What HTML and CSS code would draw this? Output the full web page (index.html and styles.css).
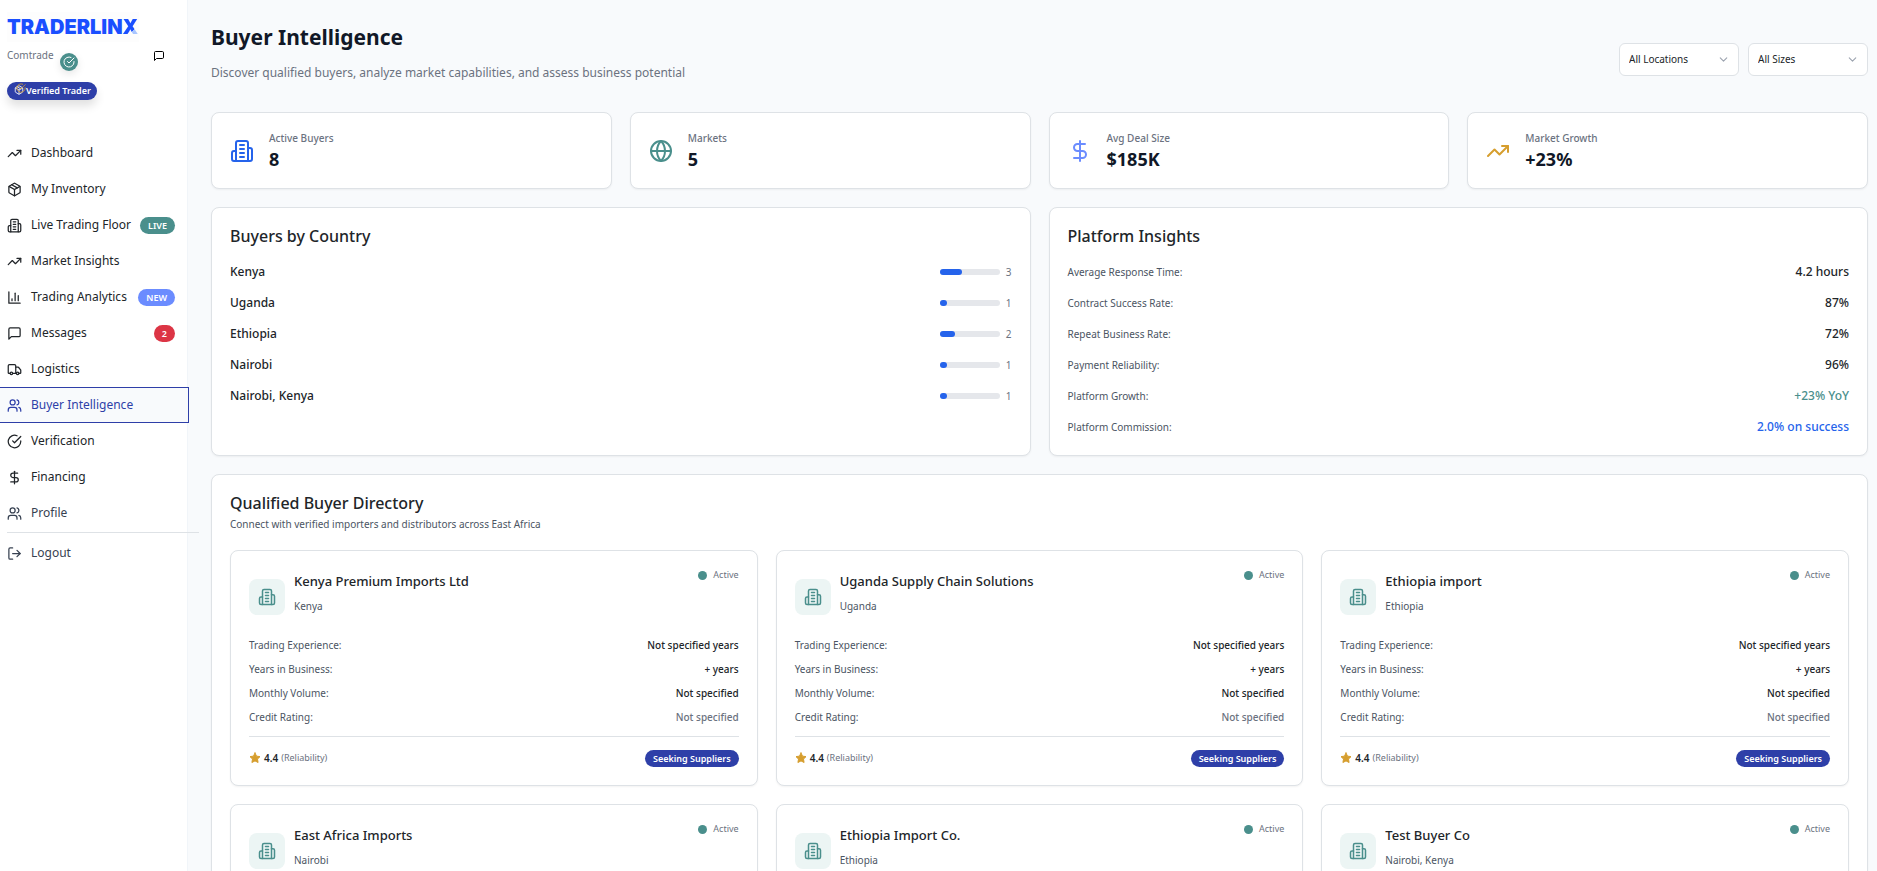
FILE: index.html
```html
<!DOCTYPE html>
<html lang="en">
<head>
    <meta charset="UTF-8">
    <meta name="viewport" content="width=device-width, initial-scale=1.0">
    <title>Buyer Intelligence - Traderlinx</title>
    <link rel="stylesheet" href="styles.css">
</head>
<body>
    <svg class="icon-defs" aria-hidden="true">
        <symbol id="i-trend" viewBox="0 0 24 24"><polyline points="22 7 13.5 15.5 8.5 10.5 2 17"/><polyline points="16 7 22 7 22 13"/></symbol>
        <symbol id="i-package" viewBox="0 0 24 24"><path d="m7.5 4.27 9 5.15"/><path d="M21 8a2 2 0 0 0-1-1.73l-7-4a2 2 0 0 0-2 0l-7 4A2 2 0 0 0 3 8v8a2 2 0 0 0 1 1.73l7 4a2 2 0 0 0 2 0l7-4A2 2 0 0 0 21 16Z"/><path d="m3.3 7 8.7 5 8.7-5"/><path d="M12 22V12"/></symbol>
        <symbol id="i-building" viewBox="0 0 24 24"><path d="M6 22V4a2 2 0 0 1 2-2h8a2 2 0 0 1 2 2v18Z"/><path d="M6 12H4a2 2 0 0 0-2 2v6a2 2 0 0 0 2 2h2"/><path d="M18 9h2a2 2 0 0 1 2 2v9a2 2 0 0 1-2 2h-2"/><path d="M10 6h4M10 10h4M10 14h4M10 18h4"/></symbol>
        <symbol id="i-chart" viewBox="0 0 24 24"><path d="M3 3v18h18"/><path d="M18 17V9"/><path d="M13 17V5"/><path d="M8 17v-3"/></symbol>
        <symbol id="i-message" viewBox="0 0 24 24"><path d="M21 15a2 2 0 0 1-2 2H7l-4 4V5a2 2 0 0 1 2-2h14a2 2 0 0 1 2 2z"/></symbol>
        <symbol id="i-truck" viewBox="0 0 24 24"><path d="M14 18V6a2 2 0 0 0-2-2H4a2 2 0 0 0-2 2v11a1 1 0 0 0 1 1h2"/><path d="M15 18H9"/><path d="M19 18h2a1 1 0 0 0 1-1v-3.65a1 1 0 0 0-.22-.624l-3.48-4.35A1 1 0 0 0 17.52 8H14"/><circle cx="17" cy="18" r="2"/><circle cx="7" cy="18" r="2"/></symbol>
        <symbol id="i-users" viewBox="0 0 24 24"><path d="M16 21v-2a4 4 0 0 0-4-4H6a4 4 0 0 0-4 4v2"/><circle cx="9" cy="7" r="4"/><path d="M22 21v-2a4 4 0 0 0-3-3.87"/><path d="M16 3.13a4 4 0 0 1 0 7.75"/></symbol>
        <symbol id="i-check" viewBox="0 0 24 24"><path d="M22 11.08V12a10 10 0 1 1-5.93-9.14"/><path d="m9 11 3 3L22 4"/></symbol>
        <symbol id="i-dollar" viewBox="0 0 24 24"><path d="M12 2v20"/><path d="M17 5H9.5a3.5 3.5 0 0 0 0 7h5a3.5 3.5 0 0 1 0 7H6"/></symbol>
        <symbol id="i-logout" viewBox="0 0 24 24"><path d="M9 21H5a2 2 0 0 1-2-2V5a2 2 0 0 1 2-2h4"/><polyline points="16 17 21 12 16 7"/><path d="M21 12H9"/></symbol>
        <symbol id="i-globe" viewBox="0 0 24 24"><circle cx="12" cy="12" r="10"/><path d="M12 2a14.5 14.5 0 0 0 0 20 14.5 14.5 0 0 0 0-20"/><path d="M2 12h20"/></symbol>
        <symbol id="i-chevron" viewBox="0 0 24 24"><path d="m6 9 6 6 6-6"/></symbol>
        <symbol id="i-star" viewBox="0 0 24 24"><polygon points="12 2 15.09 8.26 22 9.27 17 14.14 18.18 21.02 12 17.77 5.82 21.02 7 14.14 2 9.27 8.91 8.26 12 2"/></symbol>
    </svg>

    <div class="layout">
        <aside class="sidebar">
            <div class="brand">
                <div class="logo">TRADERLIN<span>X</span></div>
                <div class="account">
                    <span class="account-name">Comtrade</span>
                    <span class="account-check"><svg class="icon"><use href="#i-check"/></svg></span>
                    <button class="account-chat" aria-label="Messages"><svg class="icon"><use href="#i-message"/></svg></button>
                </div>
                <span class="verified">
                    <span class="verified-icons">
                        <svg class="icon"><use href="#i-package"/></svg>
                        <svg class="icon gold"><use href="#i-check"/></svg>
                    </span>
                    Verified Trader
                </span>
            </div>
            <nav class="nav">
                <a href="#"><svg class="icon"><use href="#i-trend"/></svg>Dashboard</a>
                <a href="#"><svg class="icon"><use href="#i-package"/></svg>My Inventory</a>
                <a href="#"><svg class="icon"><use href="#i-building"/></svg>Live Trading Floor<span class="badge live">LIVE</span></a>
                <a href="#"><svg class="icon"><use href="#i-trend"/></svg>Market Insights</a>
                <a href="#"><svg class="icon"><use href="#i-chart"/></svg>Trading Analytics<span class="badge new">NEW</span></a>
                <a href="#"><svg class="icon"><use href="#i-message"/></svg>Messages<span class="badge count">2</span></a>
                <a href="#"><svg class="icon"><use href="#i-truck"/></svg>Logistics</a>
                <a href="#" class="active"><svg class="icon"><use href="#i-users"/></svg>Buyer Intelligence</a>
                <a href="#"><svg class="icon"><use href="#i-check"/></svg>Verification</a>
                <a href="#"><svg class="icon"><use href="#i-dollar"/></svg>Financing</a>
                <a href="#" class="muted"><svg class="icon"><use href="#i-users"/></svg>Profile</a>
            </nav>
            <div class="nav nav-footer">
                <a href="#" class="muted"><svg class="icon"><use href="#i-logout"/></svg>Logout</a>
            </div>
        </aside>

        <main class="main">
            <header class="page-header">
                <div>
                    <h1>Buyer Intelligence</h1>
                    <p>Discover qualified buyers, analyze market capabilities, and assess business potential</p>
                </div>
                <div class="filters">
                    <div class="select">
                        <select id="location" aria-label="Location"><option>All Locations</option></select>
                        <svg class="icon"><use href="#i-chevron"/></svg>
                    </div>
                    <div class="select">
                        <select id="size" aria-label="Size"><option>All Sizes</option></select>
                        <svg class="icon"><use href="#i-chevron"/></svg>
                    </div>
                </div>
            </header>

            <section class="stats">
                <div class="card stat">
                    <svg class="icon blue"><use href="#i-building"/></svg>
                    <div><p class="stat-label">Active Buyers</p><p class="stat-value">8</p></div>
                </div>
                <div class="card stat">
                    <svg class="icon teal"><use href="#i-globe"/></svg>
                    <div><p class="stat-label">Markets</p><p class="stat-value">5</p></div>
                </div>
                <div class="card stat">
                    <svg class="icon periwinkle"><use href="#i-dollar"/></svg>
                    <div><p class="stat-label">Avg Deal Size</p><p class="stat-value">$185K</p></div>
                </div>
                <div class="card stat">
                    <svg class="icon gold"><use href="#i-trend"/></svg>
                    <div><p class="stat-label">Market Growth</p><p class="stat-value">+23%</p></div>
                </div>
            </section>

            <section class="panels">
                <div class="card panel">
                    <h2>Buyers by Country</h2>
                    <ul class="rows" id="countries"></ul>
                </div>
                <div class="card panel">
                    <h2>Platform Insights</h2>
                    <ul class="rows">
                        <li><span class="label">Average Response Time:</span><span class="value">4.2 hours</span></li>
                        <li><span class="label">Contract Success Rate:</span><span class="value">87%</span></li>
                        <li><span class="label">Repeat Business Rate:</span><span class="value">72%</span></li>
                        <li><span class="label">Payment Reliability:</span><span class="value">96%</span></li>
                        <li><span class="label">Platform Growth:</span><span class="value teal">+23% YoY</span></li>
                        <li><span class="label">Platform Commission:</span><span class="value blue">2.0% on success</span></li>
                    </ul>
                </div>
            </section>

            <section class="card directory">
                <h2>Qualified Buyer Directory</h2>
                <p class="directory-sub">Connect with verified importers and distributors across East Africa</p>
                <div class="buyers" id="buyers"></div>
            </section>
        </main>
    </div>

    <script>
        const countries = [
            { name: 'Kenya', count: 3 },
            { name: 'Uganda', count: 1 },
            { name: 'Ethiopia', count: 2 },
            { name: 'Nairobi', count: 1 },
            { name: 'Nairobi, Kenya', count: 1 }
        ];

        const buyers = [
            { name: 'Kenya Premium Imports Ltd', location: 'Kenya' },
            { name: 'Uganda Supply Chain Solutions', location: 'Uganda' },
            { name: 'Ethiopia import', location: 'Ethiopia' },
            { name: 'East Africa Imports', location: 'Nairobi' },
            { name: 'Ethiopia Import Co.', location: 'Ethiopia' },
            { name: 'Test Buyer Co', location: 'Nairobi, Kenya' }
        ];

        const total = countries.reduce((sum, c) => sum + c.count, 0);

        document.getElementById('countries').innerHTML = countries.map(c => `
            <li>
                <span class="value">${c.name}</span>
                <span class="share">
                    <span class="bar"><span class="bar-fill" style="width: ${c.count / total * 100}%"></span></span>
                    <span class="share-count">${c.count}</span>
                </span>
            </li>
        `).join('');

        document.getElementById('buyers').innerHTML = buyers.map(b => `
            <article class="card buyer">
                <div class="buyer-head">
                    <span class="buyer-icon"><svg class="icon teal"><use href="#i-building"/></svg></span>
                    <div class="buyer-title">
                        <h3>${b.name}</h3>
                        <p>${b.location}</p>
                    </div>
                    <span class="status">Active</span>
                </div>
                <dl class="details">
                    <div><dt>Trading Experience:</dt><dd>Not specified years</dd></div>
                    <div><dt>Years in Business:</dt><dd>+ years</dd></div>
                    <div><dt>Monthly Volume:</dt><dd>Not specified</dd></div>
                    <div><dt>Credit Rating:</dt><dd class="empty">Not specified</dd></div>
                </dl>
                <div class="buyer-foot">
                    <svg class="icon star"><use href="#i-star"/></svg>
                    <span class="rating">4.4</span>
                    <span class="rating-note">(Reliability)</span>
                    <span class="badge seeking">Seeking Suppliers</span>
                </div>
            </article>
        `).join('');
    </script>
</body>
</html>
```
FILE: styles.css
```css
* {
    box-sizing: border-box;
    margin: 0;
    padding: 0;
}

html {
    scrollbar-width: none;
}

body {
    font-family: 'Noto Sans', 'Open Sans', sans-serif;
    font-size: 12px;
    line-height: 18px;
    color: #212529;
    background: #f8fafc;
}

ul {
    list-style: none;
}

a {
    color: inherit;
    text-decoration: none;
}

.icon-defs {
    position: absolute;
    width: 0;
    height: 0;
}

.icon {
    flex: none;
    width: 15px;
    height: 15px;
    fill: none;
    stroke: currentColor;
    stroke-width: 2;
    stroke-linecap: round;
    stroke-linejoin: round;
}

.blue { color: #2563eb; }
.teal { color: #4a8f8c; }
.periwinkle { color: #6b8cff; }
.gold { color: #d69e2e; }

.layout {
    display: flex;
    min-height: 100vh;
}

/* Sidebar */
.sidebar {
    flex: none;
    width: 188px;
    background: #fff;
    border-right: 1px solid #f1f5f9;
    z-index: 1;
}

.brand {
    height: 135px;
    padding: 12px 12px 0 7px;
}

.logo {
    width: 132px;
    height: 30px;
    line-height: 31px;
    background: #fdfdfd;
    font-family: Inter, sans-serif;
    font-size: 20px;
    font-weight: 900;
    color: #1a4fff;
}

.logo span {
    background: linear-gradient(135deg, #1a4fff 65%, #a9c6ff 65%);
    background-clip: text;
    color: transparent;
}

.account {
    display: flex;
    align-items: flex-start;
    padding-top: 4px;
    height: 40px;
}

.account-name {
    font-size: 10px;
    color: #6b7280;
}

.account-check {
    display: flex;
    align-items: center;
    justify-content: center;
    width: 18px;
    height: 18px;
    margin: 7px 0 0 6px;
    border-radius: 50%;
    background: #4a8f8c;
    color: #fff;
    box-shadow: 0 3px 8px rgba(0, 0, 0, 0.1);
}

.account-check .icon {
    width: 12px;
    height: 12px;
}

.account-chat {
    display: flex;
    margin: 4px 10px 0 auto;
    border: 0;
    background: none;
    color: #000;
}

.account-chat .icon {
    width: 12px;
    height: 12px;
}

.verified {
    display: inline-flex;
    align-items: center;
    height: 18px;
    padding: 0 6px 0 7px;
    border-radius: 9px;
    background: #2e3fa8;
    color: #fff;
    font-size: 9px;
    font-weight: 600;
    box-shadow: 0 6px 10px rgba(0, 0, 0, 0.12);
}

.verified-icons {
    position: relative;
    width: 12px;
    height: 16px;
}

.verified-icons .icon {
    position: absolute;
    left: 0;
    top: 2px;
    width: 10px;
    height: 10px;
}

.verified-icons .gold {
    left: 2px;
    top: 0;
}

.nav a {
    display: flex;
    align-items: center;
    gap: 9px;
    height: 36px;
    padding: 0 14px 0 7px;
    margin-right: -2px;
    white-space: nowrap;
}

.nav .active {
    color: #2e3fa8;
    background: #f8fafc;
    border: 1px solid #2e3fa8;
    border-left: 0;
}

.nav .muted {
    color: #374151;
}

.nav-footer {
    margin: 1px -12px 0 7px;
    padding-top: 2px;
    border-top: 1px solid #dee2e6;
}

.nav-footer a {
    padding-left: 0;
}

.badge {
    height: 17px;
    padding: 0 8px;
    border-radius: 9px;
    color: #fff;
    font-size: 9px;
    font-weight: 600;
    line-height: 17px;
    margin-left: auto;
}

.live { background: #4a8f8c; }
.new { background: #6b8cff; }
.count { background: #dc3545; }
.seeking { background: #2e3fa8; }

/* Main */
.main {
    flex: 1;
    min-width: 0;
    padding: 20px 9px 24px 23px;
}

.page-header {
    display: flex;
    justify-content: space-between;
    align-items: center;
    height: 78px;
    margin-bottom: 14px;
}

h1 {
    font-size: 21px;
    line-height: 34px;
    font-weight: 700;
    color: #111827;
}

.page-header p {
    line-height: 18px;
    margin: 10px 0 16px;
    color: #6b7280;
}

.filters {
    display: flex;
    gap: 9px;
}

.select {
    position: relative;
    width: 120px;
}

.select select {
    appearance: none;
    width: 100%;
    height: 33px;
    padding: 0 28px 0 9px;
    border: 1px solid #dee2e6;
    border-radius: 6px;
    background: #fff;
    color: inherit;
    font-family: inherit;
    font-size: 10px;
}

.select .icon {
    position: absolute;
    right: 9px;
    top: 10px;
    width: 13px;
    height: 13px;
    color: #9ca3af;
    pointer-events: none;
}

.card {
    background: #fff;
    border: 1px solid #dee2e6;
    border-radius: 8px;
    box-shadow: 0 1px 2px rgba(0, 0, 0, 0.05);
}

.stats {
    display: grid;
    grid-template-columns: repeat(4, 1fr);
    gap: 18px;
    margin-bottom: 18px;
}

.stat {
    display: flex;
    align-items: center;
    gap: 15px;
    padding: 16px 18px;
}

.stat .icon {
    width: 24px;
    height: 24px;
}

.stat-label {
    font-size: 10px;
    font-weight: 500;
    color: #6b7280;
}

.stat-value {
    font-size: 18px;
    line-height: 25px;
    font-weight: 700;
    color: #111827;
}

.panels {
    display: grid;
    grid-template-columns: repeat(2, 1fr);
    gap: 18px;
    margin-bottom: 18px;
}

.panel {
    padding: 16px 18px 13px;
}

h2 {
    font-size: 16px;
    line-height: 24px;
    font-weight: 500;
}

.rows {
    padding-top: 8px;
}

.rows li {
    display: flex;
    justify-content: space-between;
    align-items: center;
    height: 31px;
}

.label {
    font-size: 10px;
    color: #4b5563;
}

.value {
    font-weight: 500;
}

.share {
    display: flex;
    align-items: center;
    gap: 6px;
}

.bar {
    display: block;
    width: 60px;
    height: 6px;
    border-radius: 3px;
    background: #e5e7eb;
}

.bar-fill {
    display: block;
    height: 100%;
    border-radius: 3px;
    background: #2563eb;
}

.share-count {
    font-size: 10px;
    color: #6b7280;
}

/* Directory */
.directory {
    padding: 16px 18px 18px;
}

.directory-sub {
    font-size: 10px;
    line-height: 18px;
    color: #4b5563;
    margin-bottom: 17px;
}

.buyers {
    display: grid;
    grid-template-columns: repeat(3, 1fr);
    gap: 18px;
}

.buyer {
    padding: 18px;
}

.buyer-head {
    display: flex;
    align-items: center;
    gap: 9px;
    height: 56px;
    margin-bottom: 11px;
}

.buyer-icon {
    display: flex;
    align-items: center;
    justify-content: center;
    width: 36px;
    height: 36px;
    border-radius: 8px;
    background: #ecf5f4;
}

.buyer-icon .icon {
    width: 18px;
    height: 18px;
}

.buyer-title h3 {
    font-size: 13px;
    line-height: 24px;
    font-weight: 500;
}

.buyer-title p {
    font-size: 10px;
    margin: 4px 0 10px;
    color: #4b5563;
}

.status {
    display: flex;
    align-items: center;
    gap: 6px;
    align-self: flex-start;
    margin-left: auto;
    font-size: 9px;
    line-height: 12px;
    color: #6b7280;
}

.status::before {
    content: '';
    width: 9px;
    height: 9px;
    border-radius: 50%;
    background: #4a8f8c;
}

.details {
    display: grid;
    gap: 6px;
    font-size: 10px;
}

.details div {
    display: flex;
    justify-content: space-between;
}

.details dt {
    color: #4b5563;
}

.details dd {
    font-weight: 500;
}

.details .empty {
    color: #6b7280;
}

.buyer-foot {
    display: flex;
    align-items: center;
    gap: 3px;
    margin-top: 10px;
    padding-top: 12px;
    border-top: 1px solid #dee2e6;
}

.star {
    width: 12px;
    height: 12px;
    color: #d69e2e;
    fill: currentColor;
}

.rating {
    font-size: 10px;
    line-height: 17px;
    font-weight: 600;
}

.rating-note {
    font-size: 9px;
    color: #6b7280;
}

@media (max-width: 1000px) {
    .stats,
    .buyers {
        grid-template-columns: repeat(2, 1fr);
    }
}
```
